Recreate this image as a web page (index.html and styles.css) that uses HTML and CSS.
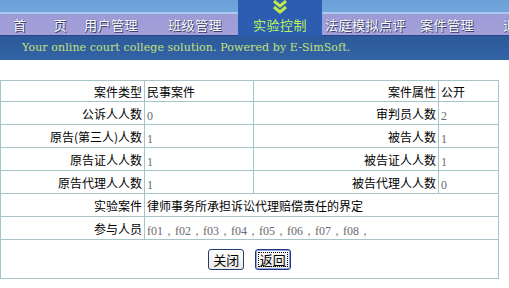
FILE: index.html
```html
<!DOCTYPE html>
<html>
<head>
  <meta charset="UTF-8" />
  <title>实验控制 - 案件详情</title>
  <link rel="stylesheet" href="styles.css">
</head>
<body>

<!-- Top banner: menu bar + slogan strip -->
<div class="header">
  <div class="nav">
    <a class="item home">首　　页</a>
    <a class="item sp17">用户管理</a>
    <a class="item sp30">班级管理</a>
    <a class="item active">
      <svg class="tab-icon" width="16" height="14" viewBox="0 0 16 14">
        <polyline points="2,1 8,6 14,1" />
        <polyline points="2,7 8,12 14,7" />
      </svg>
      实验控制
    </a>
    <a class="item sp3">法庭模拟点评</a>
    <a class="item sp14">案件管理</a>
    <a class="item sp29">退出系统</a>
  </div>
  <div class="slogan">Your online court college solution. Powered by E-SimSoft.</div>
</div>

<!-- Case detail -->
<table class="detail">
  <colgroup>
    <col class="c1">
    <col class="c2">
    <col class="c3">
    <col class="c4">
  </colgroup>
  <tr class="first">
    <td class="label">案件类型</td>
    <td class="value">民事案件</td>
    <td class="label">案件属性</td>
    <td class="value">公开</td>
  </tr>
  <tr>
    <td class="label">公诉人人数</td>
    <td class="value"><span class="num">0</span></td>
    <td class="label">审判员人数</td>
    <td class="value"><span class="num">2</span></td>
  </tr>
  <tr>
    <td class="label">原告(第三人)人数</td>
    <td class="value"><span class="num">1</span></td>
    <td class="label">被告人数</td>
    <td class="value"><span class="num">1</span></td>
  </tr>
  <tr>
    <td class="label">原告证人人数</td>
    <td class="value"><span class="num">1</span></td>
    <td class="label">被告证人人数</td>
    <td class="value"><span class="num">1</span></td>
  </tr>
  <tr>
    <td class="label">原告代理人人数</td>
    <td class="value"><span class="num">1</span></td>
    <td class="label">被告代理人人数</td>
    <td class="value"><span class="num">0</span></td>
  </tr>
  <tr>
    <td class="label">实验案件</td>
    <td class="value" colspan="3">律师事务所承担诉讼代理赔偿责任的界定</td>
  </tr>
  <tr>
    <td class="label">参与人员</td>
    <td class="value" colspan="3"><span class="num">f01，f02，f03，f04，f05，f06，f07，f08，</span></td>
  </tr>
  <tr class="actions">
    <td colspan="4">
      <button class="btn">关闭</button>
      <button class="btn focused">返回</button>
    </td>
  </tr>
</table>

</body>
</html>
```

FILE: styles.css
```css
body {
  margin: 0;
  background: #fff;
  font-family: "Noto Sans CJK SC", "Liberation Sans", sans-serif;
  font-size: 12px;
}

/* ---------- header ---------- */
.header {
  width: 509px;
  overflow: hidden;
}

.nav {
  display: flex;
  height: 36px;
  white-space: nowrap;
  background: linear-gradient(to bottom,
    #6a9fd7 0, #72a6dc 12px,
    #a9c9f2 12px, #a9c9f2 14px,
    #9d9bd6 14px, #a3a0d9 35px,
    #25468c 35px, #25468c 36px);
}

.item {
  display: block;
  flex-shrink: 0;
  padding-top: 14px;
  line-height: 21px;
  font-size: 13px;
  letter-spacing: 0.5px;
  color: #fff;
  text-shadow: 1px 1px 0 #3c3f6e, 0 0 1px #555a88;
  cursor: pointer;
}

.home { padding-left: 13px; }
.sp3  { padding-left: 3px; }
.sp14 { padding-left: 14px; }
.sp17 { padding-left: 17px; }
.sp29 { padding-left: 29px; }
.sp30 { padding-left: 30px; }

/* current tab */
.active {
  position: relative;
  width: 84px;
  margin-left: 16px;
  text-align: center;
  background: #2c5db0;
  color: #b9f25a;
  text-shadow: none;
}
.tab-icon {
  position: absolute;
  top: 0;
  left: 34px;
  fill: none;
  stroke: #bfe84a;
  stroke-width: 3;
}

.slogan {
  height: 24px;
  line-height: 24px;
  padding-left: 22px;
  background: linear-gradient(to bottom, #2c5a9a, #3364a6);
  color: #c4e07a;
  font-family: "DejaVu Serif", "Liberation Serif", serif;
  font-size: 11px;
  letter-spacing: 0.1px;
  white-space: nowrap;
}

/* ---------- detail table ---------- */
.detail {
  margin-top: 20px;
  width: 498px;
  table-layout: fixed;
  border-collapse: collapse;
}
.c1 { width: 144px; }
.c2 { width: 109px; }
.c3 { width: 185px; }
.c4 { width: 60px; }

.detail td {
  height: 22px;
  padding: 0 2px;
  border: 1px solid #a7c5c7;
  white-space: nowrap;
}
.detail tr.first td { height: 20px; }

.label { text-align: right; }
.value { text-align: left; padding-left: 3px; }

.num {
  font-family: "Liberation Serif", serif;
  font-size: 12px;
  color: #6a6a6a;
  position: relative;
  top: 2px;
}

.actions td {
  height: 38px;
  text-align: center;
}

.btn {
  width: 36px;
  height: 21px;
  margin: 0 4px;
  padding: 0;
  font-family: "Noto Sans CJK SC", sans-serif;
  font-size: 13px;
  line-height: 17px;
  color: #000;
  border: 1px solid #1e3d70;
  border-radius: 3px;
  background: linear-gradient(to bottom, #ffffff, #ecebe4);
}
.btn.focused {
  border-color: #22357a;
  box-shadow: inset 0 0 0 1px #8fa6e6;
  outline: 1px dotted #000;
  outline-offset: -4px;
}
```
